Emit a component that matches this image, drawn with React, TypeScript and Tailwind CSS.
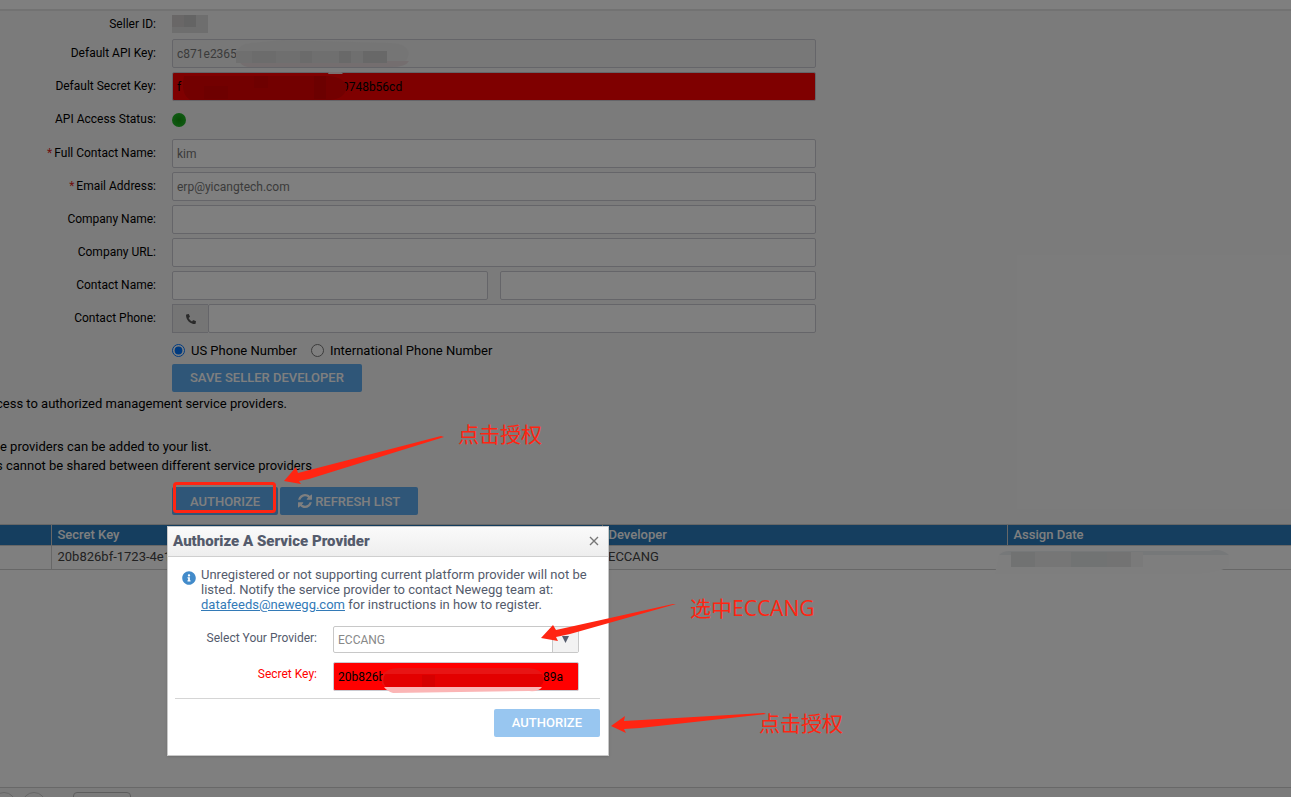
import { FaInfoCircle, FaPhoneAlt } from 'react-icons/fa';
import type { ReactNode } from 'react';

const field =
  'h-[29px] w-full min-w-0 rounded-xs border border-[#cbcbd2] bg-white px-1 text-[12px] text-[#777]';

const primary =
  'h-7 rounded-xs bg-[#5eacf0] text-[13px] font-medium text-white';

function Row({ label, htmlFor, required, children }: { label: string; htmlFor?: string; required?: boolean; children: ReactNode }) {
  return (
    <div className="flex items-center gap-4">
      <label htmlFor={htmlFor} className="w-[156px] shrink-0 pb-0.5 text-right text-[12px] leading-4 whitespace-nowrap">
        {required && <span className="mr-0.5 text-[#e02222]">*</span>}
        {label}
      </label>
      <div className="relative flex w-full max-w-[644px]">{children}</div>
    </div>
  );
}

function RefreshIcon() {
  return (
    <svg className="size-[14px]" viewBox="0 0 1536 1536" fill="currentColor" aria-hidden="true">
      <path d="M1511 928q0 5-1 7-64 268-268 434.5t-478 166.5q-146 0-282.5-55t-243.5-157l-129 129q-19 19-45 19t-45-19-19-45v-448q0-26 19-45t45-19h448q26 0 45 19t19 45-19 45l-137 137q71 66 161 102t187 36q134 0 250-65t186-179q11-17 53-117 8-23 30-23h192q13 0 22.5 9.5t9.5 22.5zm25-800v448q0 26-19 45t-45 19h-448q-26 0-45-19t-19-45 19-45l138-138q-148-137-349-137-134 0-250 65t-186 179q-11 17-53 117-8 23-30 23h-199q-13 0-22.5-9.5t-9.5-22.5v-7q65-268 270-434.5t480-166.5q146 0 284 55.5t245 156.5l130-129q19-19 45-19t45 19 19 45z" />
    </svg>
  );
}

function Arrow({ points }: { points: string }) {
  return <polygon points={points} fill="#ff2512" />;
}

export default function App() {
  return (
    <div className="relative h-screen overflow-hidden bg-[#f7f7f7] font-[Roboto,sans-serif] text-[13px] text-black">
      <main className="flex h-full flex-col">
        <div className="h-[11px] shrink-0 border-b-2 border-[#e4e4e4] bg-white" />

        <form className="flex flex-col gap-1 pt-1" onSubmit={(e) => e.preventDefault()}>
          <Row label="Seller ID:">
            <svg width="36" height="20" aria-hidden="true">
              <rect x="0" y="0" width="36" height="18" fill="#dcdcdc" />
              <rect x="0" y="0" width="12" height="12" fill="#d2cece" />
              <rect x="12" y="0" width="12" height="12" fill="#c8c8c8" />
            </svg>
          </Row>
          <Row label="Default API Key:" htmlFor="api-key">
            <input id="api-key" className={`${field} !bg-[#f0f0f0]`} defaultValue="c871e2365" readOnly />
            <svg className="absolute top-0 left-16" width="174" height="29" aria-hidden="true">
              <path d="M0 15Q2 5 15 4L45 1L155 4Q170 4 173 14Q171 27 155 28L12 28Q2 25 0 15Z" fill="#ebebeb" />
              <path d="M3 22H173Q170 28 155 28H12Q5 27 3 22Z" fill="#e8dcde" />
              <rect x="0" y="12" width="151" height="12" fill="#dedede" />
              <rect x="16" y="12" width="24" height="12" fill="#d8d8d8" />
              <rect x="64" y="12" width="12" height="12" fill="#d6d6d6" />
              <rect x="103" y="12" width="12" height="12" fill="#d2d2d2" />
              <rect x="127" y="12" width="24" height="12" fill="#d0d0d0" />
            </svg>
          </Row>
          <Row label="Default Secret Key:" htmlFor="secret-key">
            <input
              id="secret-key"
              className={`${field} !bg-[#ff0000] !text-black`}
              defaultValue={`f${' '.repeat(54)}9748b56cd`}
              readOnly
            />
            <svg className="absolute top-0 left-2" width="168" height="29" aria-hidden="true">
              <path d="M4 4H150Q165 6 167 15Q165 27 150 28H10Q0 22 4 4Z" fill="#e60000" />
              <rect x="24" y="14" width="24" height="13" fill="#dc0000" />
              <rect x="74" y="4" width="14" height="12" fill="#dc0000" />
              <rect x="134" y="4" width="12" height="23" fill="#d80000" />
              <path d="M149 0H161L163 2H148Z" fill="#f5e0e0" />
            </svg>
          </Row>
          <Row label="API Access Status:">
            <div className="flex h-[30px] items-center">
              <span className="size-[14px] rounded-full bg-radial from-[#109a08] to-[#28c030]" />
            </div>
          </Row>
          <Row label="Full Contact Name:" htmlFor="full-name" required>
            <input id="full-name" className={field} defaultValue="kim" />
          </Row>
          <Row label="Email Address:" htmlFor="email" required>
            <input id="email" type="email" className={field} defaultValue="erp@yicangtech.com" />
          </Row>
          <Row label="Company Name:" htmlFor="company">
            <input id="company" className={field} />
          </Row>
          <Row label="Company URL:" htmlFor="company-url">
            <input id="company-url" className={field} />
          </Row>
          <Row label="Contact Name:" htmlFor="contact-first">
            <div className="flex w-full gap-3">
              <input id="contact-first" className={field} />
              <input aria-label="Contact last name" className={field} />
            </div>
          </Row>
          <Row label="Contact Phone:" htmlFor="phone">
            <span className="flex w-9 shrink-0 items-center justify-center border border-r-0 border-[#cbcbd2] bg-[#ebebeb]">
              <FaPhoneAlt className="size-[10px] text-[#555]" />
            </span>
            <input id="phone" type="tel" className={field} />
          </Row>
          <div className="ml-[172px]">
            <div className="flex h-[27px] items-center">
              <input id="us" name="phone-type" type="radio" defaultChecked className="mr-[6px] size-[13px]" />
              <label htmlFor="us" className="mr-[14px]">US Phone Number</label>
              <input id="intl" name="phone-type" type="radio" className="mr-[6px] size-[13px]" />
              <label htmlFor="intl">International Phone Number</label>
            </div>
            <button type="submit" className={`${primary} px-[18px]`}>SAVE SELLER DEVELOPER</button>
          </div>
        </form>

        <section className="pt-[2px] leading-[19px] whitespace-nowrap">
          <p className="-ml-1">cess to authorized management service providers.</p>
          <p className="pt-6">e providers can be added to your list.</p>
          <p className="-ml-1">s cannot be shared between different service providers</p>
          <div className="mt-3 mb-[9px] ml-[172px] flex gap-0.5">
            <button type="button" className={`${primary} px-[18px]`}>AUTHORIZE</button>
            <button type="button" className={`${primary} flex items-center gap-[3px] px-[18px]`}>
              <RefreshIcon />
              REFRESH LIST
            </button>
          </div>
        </section>

        <section className="flex-1 bg-white">
          <table className="w-full table-fixed border-y border-[#cfcfcf] text-left">
            <thead>
              <tr className="h-5 border-b border-[#cfcfcf] bg-[#2a7dbf] text-white">
                <th className="w-[51px]" />
                <th className="w-[551px] border-l border-[#cfcfcf] px-[6px] font-medium">Secret Key</th>
                <th className="w-[405px] border-l border-[#cfcfcf] px-[6px] font-medium">Developer</th>
                <th className="border-l border-[#cfcfcf] px-[6px] font-medium">Assign Date</th>
              </tr>
            </thead>
            <tbody>
              <tr className="h-6 text-[#444]">
                <td />
                <td className="border-l border-[#cfcfcf] px-[6px]">20b826bf-1723-4e1</td>
                <td className="px-[6px]">ECCANG</td>
                <td className="relative">
                  <svg className="absolute top-1 -left-3" width="240" height="24" aria-hidden="true">
                    <path d="M0 24L4 3Q8 0 14 1H214Q226 -2 234 4V16Q224 23 200 24Z" fill="#fdfdfd" />
                    <path d="M4 5Q8 1 14 1H214Q226 -2 234 5Z" fill="#edf0f3" />
                    <rect x="16" y="2" width="132" height="15" fill="#f4f4f4" />
                    <rect x="16" y="2" width="120" height="15" fill="#ececec" />
                    <rect x="16" y="2" width="24" height="15" fill="#e2e4e4" />
                    <rect x="76" y="2" width="36" height="15" fill="#e3e7e7" />
                    <rect x="112" y="2" width="24" height="15" fill="#e7e7e7" />
                  </svg>
                </td>
              </tr>
            </tbody>
          </table>
        </section>

        <footer className="flex h-[10px] shrink-0 items-start border-t border-[#d0d0d0] pt-1">
          <span className="-ml-2 size-6 shrink-0 rounded-full border border-[#ccc]" />
          <span className="ml-[6px] size-6 shrink-0 rounded-full border border-[#ccc]" />
          <span className="ml-[27px] h-6 w-[58px] shrink-0 rounded-sm border border-[#bbb]" />
        </footer>
      </main>

      <div className="absolute inset-0 bg-black/50" />

      <div
        role="dialog"
        aria-labelledby="dialog-title"
        className="absolute top-[526px] left-[167px] w-[442px] border border-[#c8c8c8] bg-white text-[#545b6c] shadow-sm"
      >
        <div className="flex h-[30px] items-center justify-between border-b border-[#cfcfcf] bg-linear-to-b from-[#fafafa] to-[#eeeeee] pr-2 pl-[5px]">
          <h2 id="dialog-title" className="text-[15px] font-black">Authorize A Service Provider</h2>
          <button type="button" aria-label="Close" className="text-[#777]">
            <svg width="12" height="12" viewBox="0 0 12 12" stroke="currentColor" strokeWidth="1.4">
              <path d="M2 1L10 9M10 1L2 9" />
            </svg>
          </button>
        </div>
        <div className="pr-2 pb-[18px] pl-[7px]">
          <div className="flex gap-[5px] pt-[10px] pl-[7px]">
            <FaInfoCircle className="mt-1 size-[14px] shrink-0 text-[#428bca]" />
            <p className="leading-[15px]">
              Unregistered or not supporting current platform provider will not be<br />
              listed. Notify the service provider to contact Newegg team at:<br />
              <a href="mailto:datafeeds@newegg.com" className="text-[#337ab7] underline">datafeeds@newegg.com</a> for
              instructions in how to register.
            </p>
          </div>
          <div className="mt-[14px] flex gap-4">
            <label htmlFor="provider" className="w-[142px] shrink-0 pt-1 text-right text-[12px] leading-4">Select Your Provider:</label>
            <div className="relative w-[246px]">
              <select
                id="provider"
                className="block h-[27px] w-full appearance-none rounded-xs border border-[#c8c8c8] bg-white px-1 text-[12px] text-[#888]"
              >
                <option>ECCANG</option>
              </select>
              <span className="pointer-events-none absolute inset-y-px right-px flex w-[26px] items-center justify-center border-l border-[#c8c8c8] bg-[#f2f2f2]">
                <svg width="7" height="7" viewBox="0 0 7 7"><path d="M0 0H7L3.5 7Z" fill="#545b6c" /></svg>
              </span>
            </div>
          </div>
          <div className="mt-[9px] flex gap-4">
            <label htmlFor="provider-key" className="w-[142px] shrink-0 pt-1 text-right text-[12px] leading-4 text-[#ff0000]">Secret Key:</label>
            <div className="relative w-[246px]">
              <input
                id="provider-key"
                className={`${field} !bg-[#ff0000] !text-black`}
                defaultValue={`20b826b${' '.repeat(53)}89a`}
                readOnly
              />
              <svg className="absolute top-1 left-12" width="164" height="28" aria-hidden="true">
                <path d="M1 18V10Q5 2 18 2H148Q161 3 163 12Q162 20 158 21H5Z" fill="#e81414" />
                <path d="M4 8H161L163 12Q162 20 158 21H5Q0 16 4 8Z" fill="#e30000" />
                <path d="M3 21H161Q158 26 148 25L12 27Q6 25 3 21Z" fill="#fbb5b5" />
                <rect x="41" y="9" width="13" height="12" fill="#d60000" />
              </svg>
            </div>
          </div>
          <div className="mt-[7px] flex justify-end border-t border-[#d5d5d5] pt-[10px]">
            <button type="button" className="h-7 rounded-xs bg-[#98c6f0] px-[18px] text-[13px] font-medium text-white">AUTHORIZE</button>
          </div>
        </div>
      </div>

      <div className="pointer-events-none absolute inset-0 font-['Open_Sans','Noto_Sans_CJK_SC',sans-serif] text-[21px] leading-6 whitespace-nowrap text-[#ff2512]">
        <svg className="absolute inset-0 size-full" aria-hidden="true">
          <rect x="174.5" y="483.5" width="100" height="28" rx="2" fill="none" stroke="#ff2512" strokeWidth="3" />
          <Arrow points="284,481 296,467 298,473 441,436 444,437 309,479 299,481 301,484" />
          <Arrow points="541,638 553,625 556,630 673,604 676,604 570,634 556,637 558,641" />
          <Arrow points="611,726 625,716 624,721 764,713 766,714 640,728 624,729 626,733" />
        </svg>
        <span className="absolute top-[422px] left-[458px]">点击授权</span>
        <span className="absolute top-[596px] left-[690px]">选中ECCANG</span>
        <span className="absolute top-[711px] left-[759px]">点击授权</span>
      </div>
    </div>
  );
}
